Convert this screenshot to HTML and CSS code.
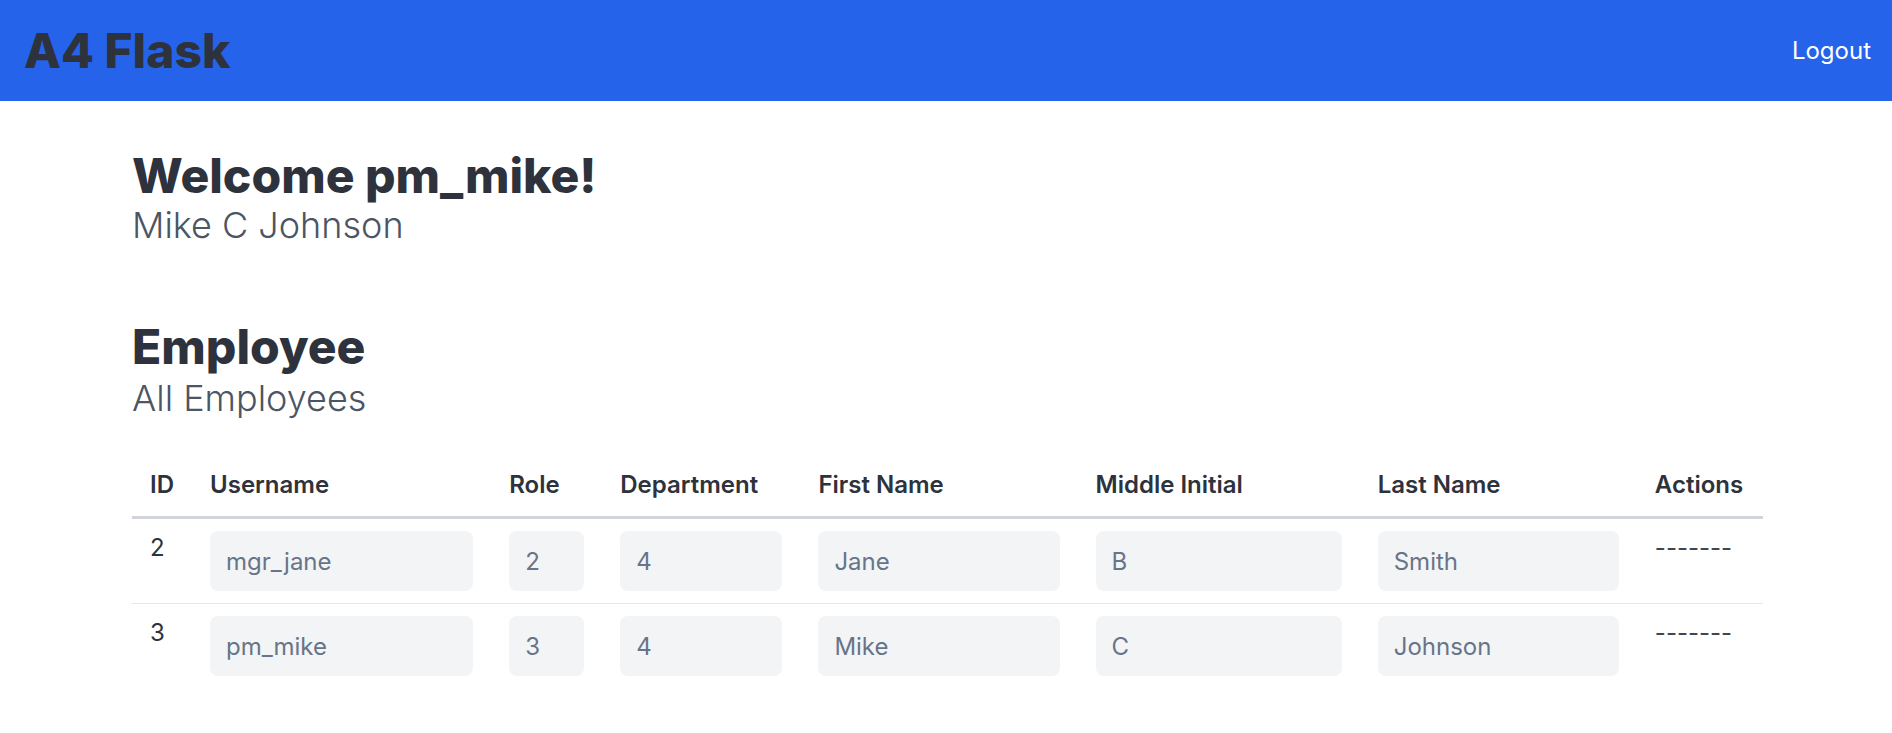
FILE: index.html
```html
<!DOCTYPE html>
<html lang="en">
<head>
<meta charset="utf-8">
<title>A4 Flask</title>
<link rel="stylesheet" href="styles.css">
</head>
<body>
<header class="navbar">
  <a class="brand" href="#">A4 Flask</a>
  <a class="logout" href="#">Logout</a>
</header>
<main class="container">
  <section class="welcome">
    <h1 class="title">Welcome pm_mike!</h1>
    <p class="subtitle">Mike C Johnson</p>
  </section>
  <section class="employees">
    <h1 class="title">Employee</h1>
    <p class="subtitle">All Employees</p>
    <table class="emp-table">
      <colgroup>
        <col class="c-id"><col class="c-user"><col class="c-role"><col class="c-dept"><col class="c-first"><col class="c-mid"><col class="c-last"><col class="c-act">
      </colgroup>
      <thead>
        <tr>
          <th>ID</th><th>Username</th><th>Role</th><th>Department</th><th>First Name</th><th>Middle Initial</th><th>Last Name</th><th>Actions</th>
        </tr>
      </thead>
      <tbody>
        <tr>
          <td class="txt">2</td>
          <td><input class="field" value="mgr_jane" readonly></td>
          <td><input class="field" value="2" readonly></td>
          <td><input class="field" value="4" readonly></td>
          <td><input class="field" value="Jane" readonly></td>
          <td><input class="field" value="B" readonly></td>
          <td><input class="field" value="Smith" readonly></td>
          <td class="txt dash">-------</td>
        </tr>
        <tr>
          <td class="txt">3</td>
          <td><input class="field" value="pm_mike" readonly></td>
          <td><input class="field" value="3" readonly></td>
          <td><input class="field" value="4" readonly></td>
          <td><input class="field" value="Mike" readonly></td>
          <td><input class="field" value="C" readonly></td>
          <td><input class="field" value="Johnson" readonly></td>
          <td class="txt dash">-------</td>
        </tr>
      </tbody>
    </table>
  </section>
</main>
</body>
</html>
```
FILE: styles.css
```css
* { box-sizing: border-box; }
html, body { margin: 0; padding: 0; background: #ffffff; }
body {
  font-family: Inter, "Noto Sans", "Liberation Sans", sans-serif;
  color: #2d323c;
}
.navbar {
  height: 101px;
  background: #2563eb;
  display: flex;
  align-items: center;
  justify-content: space-between;
  padding: 0 21px 0 24px;
}
.brand {
  font-size: 48px;
  line-height: 48px;
  font-weight: 800;
  color: #2d323c;
  text-decoration: none;
}
.logout {
  font-size: 24px;
  line-height: 32px;
  color: #ffffff;
  text-decoration: none;
}
.container {
  width: 1631px;
  margin: 0 0 0 132px;
  padding-top: 51px;
}
.title {
  margin: 0;
  font-size: 48px;
  line-height: 48px;
  font-weight: 800;
  color: #2d323c;
}
.subtitle {
  margin: 5px 0 0;
  font-size: 36px;
  line-height: 40px;
  font-weight: 300;
  color: #4b5563;
}
.employees { margin-top: 78px; }
.employees .subtitle { margin-top: 7px; }
.emp-table {
  margin-top: 43px;
  width: 100%;
  table-layout: fixed;
  border-collapse: collapse;
}
.c-id { width: 60px; }
.c-user { width: 299px; }
.c-role { width: 111px; }
.c-dept { width: 198px; }
.c-first { width: 277px; }
.c-mid { width: 282px; }
.c-last { width: 277px; }
.c-act { width: 126px; }
.emp-table th {
  text-align: left;
  font-size: 24px;
  line-height: 32px;
  font-weight: 600;
  color: #2d323c;
  padding: 8px 18px 15px;
  border-bottom: 3px solid #d1d5db;
}
.emp-table td {
  padding: 12px 18px;
  vertical-align: top;
  font-size: 24px;
  line-height: 32px;
  color: #2d323c;
}
.emp-table tbody tr + tr td { border-top: 1px solid #e5e7eb; }
.emp-table td.txt { padding-top: 13px; color: #2d323c; }
.emp-table td.dash { color: #3f4652; }
.field {
  display: block;
  width: 100%;
  height: 60px;
  border: none;
  border-radius: 8px;
  background: #f3f4f6;
  padding: 0 16px;
  font-family: Inter, "Noto Sans", "Liberation Sans", sans-serif;
  font-size: 24px;
  color: #687488;
  outline: none;
}
```
